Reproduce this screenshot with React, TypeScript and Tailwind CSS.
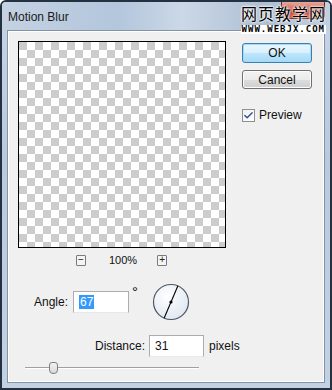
import { Check } from 'lucide-react';

const font = { fontFamily: '"Liberation Sans", Arial, sans-serif' };

const Dial = () => (
  <svg width="38" height="38" viewBox="0 0 38 38">
    <defs>
      <radialGradient id="dialFill" cx="40%" cy="35%" r="70%">
        <stop offset="0%" stopColor="#ffffff" />
        <stop offset="100%" stopColor="#dfe7f0" />
      </radialGradient>
    </defs>
    <circle cx="19" cy="19" r="17.5" fill="url(#dialFill)" stroke="#4d5866" strokeWidth="1.2" />
    <line x1="12.2" y1="35" x2="25.8" y2="3" stroke="#000" strokeWidth="1.1" />
    <circle cx="19" cy="19" r="1.6" fill="#000" />
  </svg>
);

const SmallBox = ({ sign }: { sign: string }) => (
  <div className="w-[10px] h-[11px] border border-[#7a7a7a] rounded-[1px] bg-[#f4f4f4] flex items-center justify-center text-[10px] leading-none text-[#222]">
    {sign}
  </div>
);

export default function App() {
  return (
    <div
      className="w-[332px] h-[390px] flex flex-col bg-[linear-gradient(180deg,#c6d5e6_0%,#b9cadd_40%,#c3d2e3_100%)] border-2 border-[#243140] rounded-t-[6px] overflow-hidden relative"
      style={font}
    >
      {/* title bar */}
      <div className="h-[28px] flex items-start bg-[linear-gradient(90deg,#c4d2e2_0%,#b3c6dc_35%,#cbd8e7_55%,#aebfd4_80%,#c2d0e0_100%)]">
        <span className="ml-[6px] mt-[6px] text-[12px] text-[#1a1a1a]">Motion Blur</span>
        <div className="ml-auto mr-[5px] w-[44px] h-[17px] rounded-b-[4px] border border-t-0 border-[#6b2b25] bg-[linear-gradient(180deg,#e9a99b_0%,#d0685a_45%,#b8362a_55%,#d36a4c_100%)]" />
      </div>

      {/* watermark */}
      <div className="absolute right-[4px] top-[2px] flex flex-col items-end">
        <span
          className="text-[16px] leading-[19px] text-black tracking-[1px]"
          style={{ fontFamily: '"Noto Sans CJK SC", sans-serif', textShadow: '0 0 2px #fff, 0 0 2px #fff, 0 0 3px #fff' }}
        >
          网页教学网
        </span>
        <span className="mt-[2px] bg-white px-[1px] text-[9px] leading-[9px] font-bold tracking-[1px] text-black" style={{ fontFamily: '"DejaVu Sans Mono", monospace' }}>
          WWW.WEBJX.COM
        </span>
      </div>

      {/* client */}
      <div className="mx-[5px] mb-[5px] flex-1 bg-[#f0f0f0] border border-[#8393a6] shadow-[inset_0_0_0_1px_#ffffff] flex flex-col text-[12px] text-[#111]">
        <div className="flex pt-[10px] pl-[10px]">
          <div className="flex flex-col">
            <div className="w-[208px] h-[207px] border border-black bg-[image:conic-gradient(#ffffff_25%,#cccccc_0_50%,#ffffff_0_75%,#cccccc_0)] bg-[length:16px_16px]" />
            <div className="flex items-center mt-[6px] pl-[58px] h-[12px]">
              <SmallBox sign="−" />
              <span className="ml-[23px] text-[11px]">100%</span>
              <div className="ml-[20px]">
                <SmallBox sign="+" />
              </div>
            </div>
          </div>

          <div className="ml-[16px] pt-[2px] flex flex-col">
            <button className="w-[70px] h-[20px] rounded-[3px] border border-[#3c7fb1] bg-[linear-gradient(180deg,#eaf6fd_0%,#d9f0fc_50%,#bee6fd_51%,#a7d9f5_100%)] shadow-[inset_0_0_0_1px_#9fdcfb] text-[12px] leading-none">
              OK
            </button>
            <button className="mt-[7px] w-[70px] h-[19px] rounded-[3px] border border-[#707070] bg-[linear-gradient(180deg,#f2f2f2_0%,#ebebeb_50%,#dddddd_51%,#cfcfcf_100%)] shadow-[inset_0_0_0_1px_#fcfcfc] text-[12px] leading-none">
              Cancel
            </button>
            <label className="mt-[17px] flex items-center">
              <span className="w-[13px] h-[13px] border border-[#8e8f8f] bg-[linear-gradient(135deg,#f0f0f0,#ffffff)] flex items-center justify-center">
                <Check className="w-[11px] h-[11px] text-[#2a4f9c]" strokeWidth={3} />
              </span>
              <span className="ml-[4px]">Preview</span>
            </label>
          </div>
        </div>

        {/* angle */}
        <div className="flex items-center mt-[17px] ml-[26px]">
          <span className="w-[39px]">Angle:</span>
          <div className="w-[56px] h-[22px] bg-white border border-[#abadb3] border-b-[#e3e9ef] flex items-center pl-[5px]">
            <span className="bg-[#3399ff] text-white px-[1px] leading-[14px]">67</span>
          </div>
          <span className="ml-[3px] self-start mt-[1px] text-[15px] leading-[15px]">°</span>
          <div className="ml-[14px]">
            <Dial />
          </div>
        </div>

        {/* distance */}
        <div className="flex items-center mt-[14px] ml-[87px]">
          <span className="w-[54px]">Distance:</span>
          <div className="w-[55px] h-[22px] bg-white border border-[#abadb3] border-b-[#e3e9ef] flex items-center pl-[5px]">
            31
          </div>
          <span className="ml-[5px]">pixels</span>
        </div>

        {/* slider */}
        <div className="mt-[5px] ml-[17px] w-[174px] h-[12px] relative flex items-center">
          <div className="w-full h-[2px] border-t border-[#a0a0a0] border-b border-b-[#ffffff]" />
          <div className="absolute left-[24px] top-0 w-[9px] h-[12px] rounded-t-[3px] rounded-b-[4px] border border-[#7f7f7f] bg-[linear-gradient(180deg,#f3f3f3,#d8d8d8)]" />
        </div>
      </div>
    </div>
  );
}
